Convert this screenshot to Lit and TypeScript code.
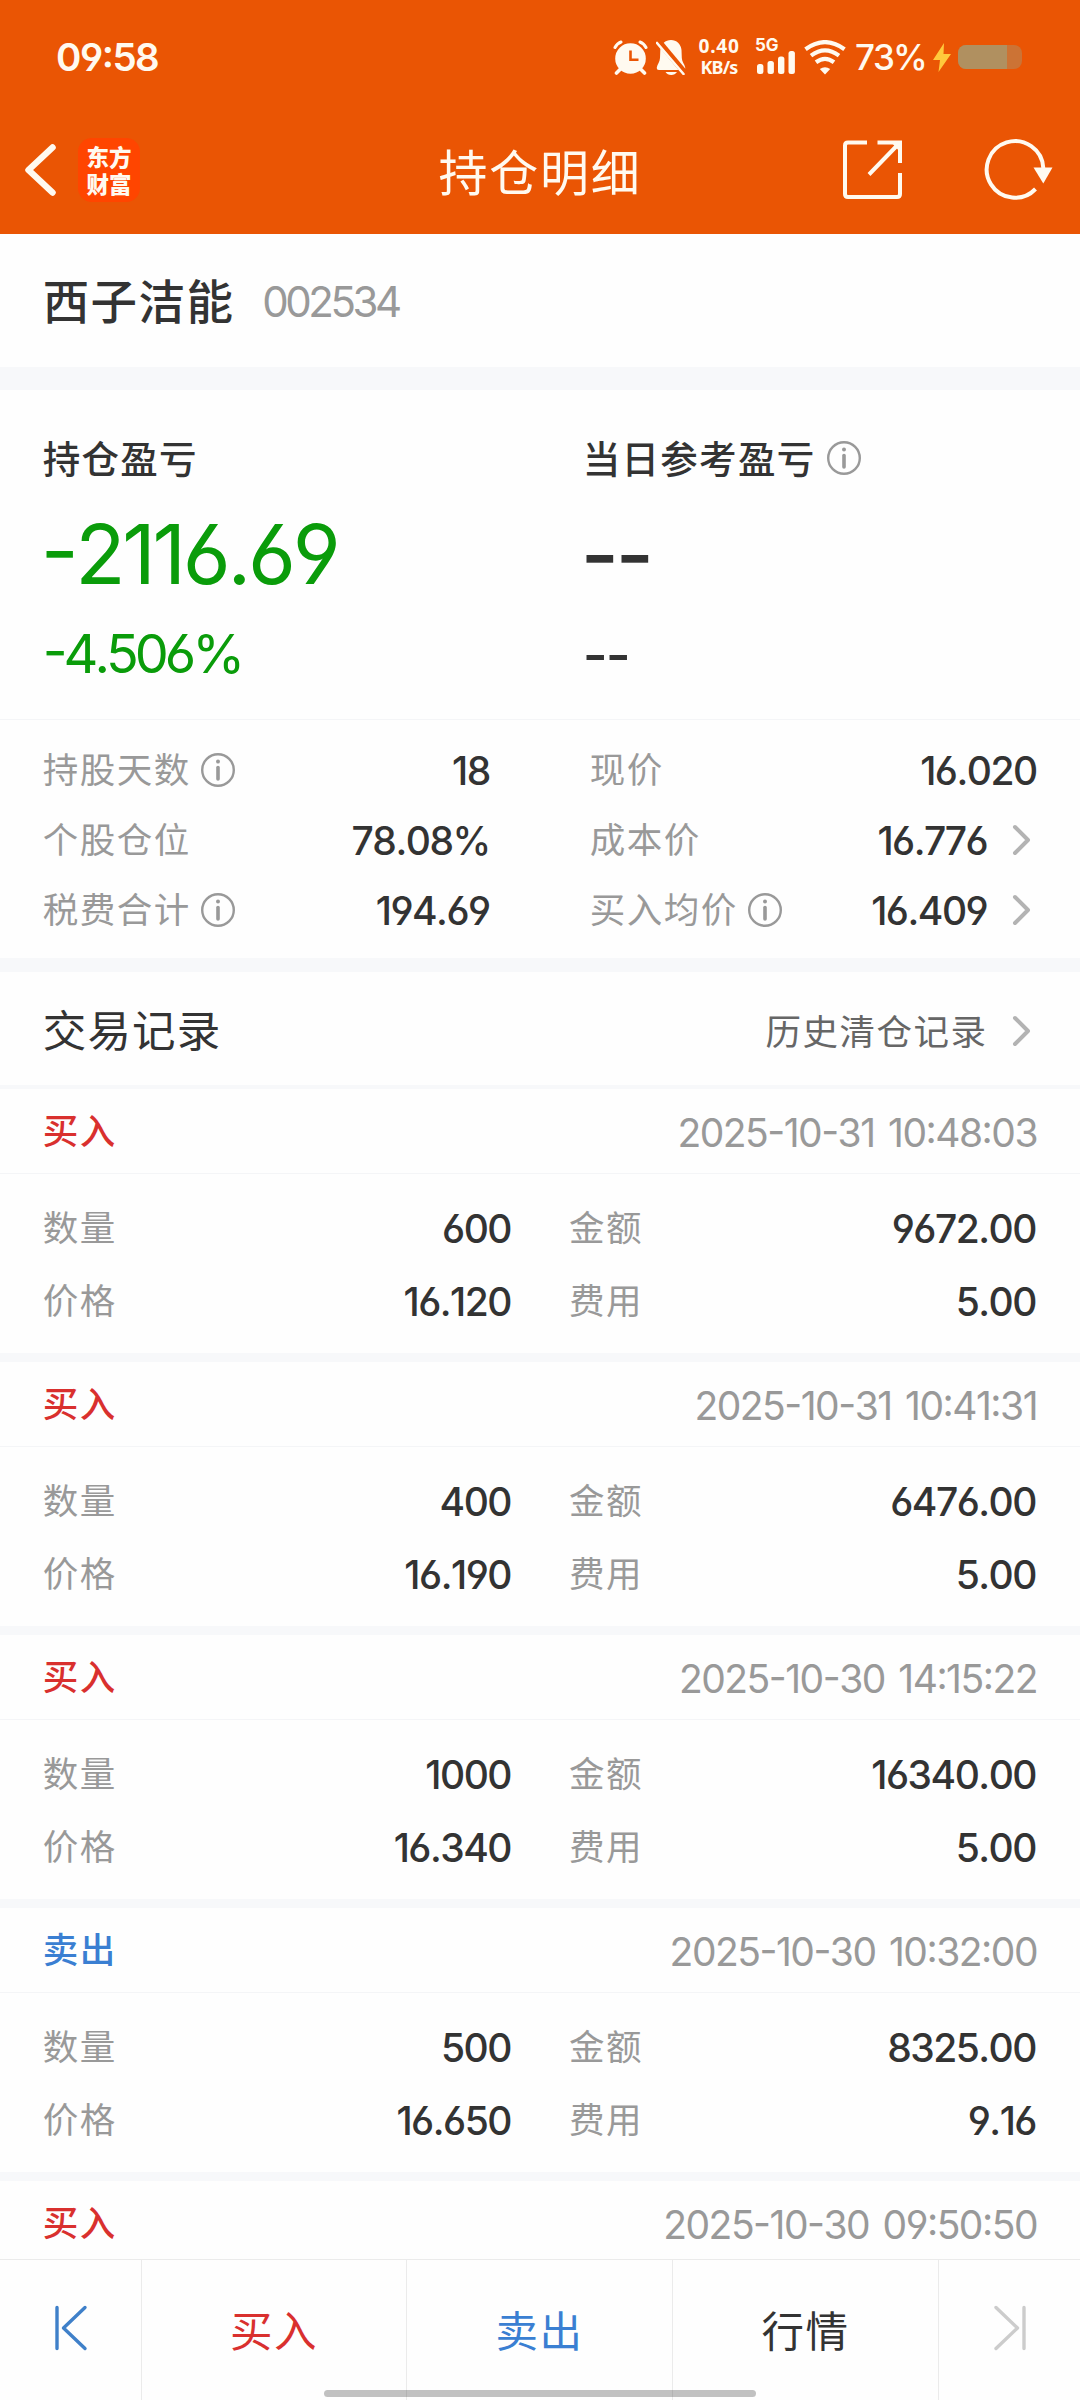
import { LitElement, html, css } from "lit";
import { customElement, property } from "lit/decorators.js";

interface Trade {
  side: "buy" | "sell";
  time: string;
  qty: string;
  amount: string;
  price: string;
  fee: string;
}

const TRADES: Trade[] = [
  { side: "buy", time: "2025-10-31 10:48:03", qty: "600", amount: "9672.00", price: "16.120", fee: "5.00" },
  { side: "buy", time: "2025-10-31 10:41:31", qty: "400", amount: "6476.00", price: "16.190", fee: "5.00" },
  { side: "buy", time: "2025-10-30 14:15:22", qty: "1000", amount: "16340.00", price: "16.340", fee: "5.00" },
  { side: "sell", time: "2025-10-30 10:32:00", qty: "500", amount: "8325.00", price: "16.650", fee: "9.16" },
  { side: "buy", time: "2025-10-30 09:50:50", qty: "", amount: "", price: "", fee: "" },
];

const infoIcon = html`<svg class="info" width="34" height="34" viewBox="0 0 34 34" fill="none">
  <circle cx="17" cy="17" r="15.8" stroke="#999" stroke-width="2.4" />
  <circle cx="17" cy="8.6" r="2" fill="#999" />
  <path d="M17 14.5v11.5" stroke="#999" stroke-width="3.6" stroke-linecap="round" />
</svg>`;

const chevron = html`<svg class="chevron" width="20" height="32" viewBox="0 0 20 32" fill="none">
  <path d="M3 3l13 13L3 29" stroke="#b3b3b3" stroke-width="4" stroke-linecap="round" stroke-linejoin="round" />
</svg>`;

@customElement("status-bar")
class StatusBar extends LitElement {
  static styles = css`
    :host { display: flex; height: 106px; padding: 8px 58px 0 56px; box-sizing: border-box; align-items: center;
      color: #fffaf0; font-family: Inter, "Noto Sans", sans-serif; }
    .time { flex: 1; font-size: 38.5px; font-weight: 600; letter-spacing: -1.5px; line-height: 44px; }
    .icons { display: flex; align-items: center; }
    .alarm { margin-right: 8px; }
    .bell { margin-right: 10px; }
    .net { width: 46px; text-align: center; font-weight: 700; margin-right: 13px; font-family: "Noto Sans", sans-serif; }
    .net span { display: block; line-height: 21px; }
    .rate { font-size: 19px; letter-spacing: 0.5px; }
    .unit { font-size: 18px; letter-spacing: -0.8px; }
    .cell { width: 42px; margin-right: 7px; }
    .gen { display: block; font-size: 17px; font-weight: 700; line-height: 11px; height: 10px; letter-spacing: -0.2px; }
    .cell svg, .icons svg { display: block; }
    .wifi { margin-right: 9px; }
    .pct { font-size: 35px; font-weight: 500; letter-spacing: -2px; line-height: 40px; width: 78px; }
    .bolt { margin-right: 7px; }
    .battery { width: 64px; height: 24px; border-radius: 8px; overflow: hidden; background: #cc7335; }
    .level { height: 100%; background: #b09060; }
  `;
  render() {
    return html`
      <div class="time">09:58</div>
      <div class="icons">
        <svg class="alarm" width="35" height="35" viewBox="0 0 35 35" fill="none">
          <path d="M2 7.5Q4 3.500 8 2M33 7.500Q31 3.500 27 2" stroke="#fffaf0" stroke-width="3" stroke-linecap="round" />
          <path d="M7.500 29l-4 4M27.500 29l4 4" stroke="#fffaf0" stroke-width="3.600" stroke-linecap="round" />
          <circle cx="17.500" cy="18.500" r="15.300" fill="#fffaf0" />
          <path d="M17.500 10.500v9.200h8" stroke="#ea5504" stroke-width="2.600" />
        </svg>
        <svg class="bell" width="30" height="36" viewBox="0 0 30 36">
          <path fill="#fffaf0" d="M15 1C9.500 1 4.800 5 4.300 11L4 19C3.800 23 1.500 25 .8 28.500Q.6 31 3 31H27Q29.600 31 29.200 28.500C28.500 25 26 23 25.800 19L25.500 11C25 5 20.500 1 15 1zM9.500 33h11.500q-2 3-5.800 3t-5.700-3z" />
          <path d="M1.500 1L29 34" stroke="#ea5504" stroke-width="6" />
          <path d="M1 4L27.500 35" stroke="#fffaf0" stroke-width="2.600" stroke-linecap="round" />
        </svg>
        <div class="net"><span class="rate">0.40</span><span class="unit">KB/s</span></div>
        <div class="cell">
          <span class="gen">5G</span>
          <svg width="42" height="24" viewBox="0 0 42 24" fill="#fffaf0">
            <rect x="2" y="14" width="6.400" height="10" rx="2.500" /><rect x="12.500" y="11" width="6.400" height="13" rx="2.500" />
            <rect x="23" y="6.500" width="6.400" height="17.500" rx="2.500" /><rect x="33.500" y="1" width="6.400" height="23" rx="2.500" />
          </svg>
        </div>
        <svg class="wifi" width="42" height="35" viewBox="0 0 42 35" fill="none" stroke="#fffaf0" stroke-width="4.200">
          <path d="M1.500 9.200Q21-5 40.500 9.200M7 15.600Q21 5.300 35 15.600M12 22.200Q21 15.500 30 22.200" />
          <path d="M15.800 29Q21 25.400 26.200 29L21 34.500z" fill="#fffaf0" stroke="none" />
        </svg>
        <div class="pct">73%</div>
        <svg class="bolt" width="18" height="29" viewBox="0 0 18 29"><path d="M11 0L0 17h7L5.500 29 18 11h-7.500z" fill="#ffc93c" /></svg>
        <div class="battery"><div class="level" style="width:76%"></div></div>
      </div>`;
  }
}

@customElement("nav-bar")
class NavBar extends LitElement {
  static styles = css`
    :host { display: grid; grid-template-columns: 400px 1fr 400px; height: 128px; align-items: start; color: #fffaf0;
      font-family: Inter, "Noto Sans CJK SC", sans-serif; }
    .left { display: flex; align-items: center; padding: 32px 0 0 23px; }
    .back { margin-right: 21px; }
    .logo { width: 62px; height: 64px; border-radius: 14px; background: #ff4500; display: flex; align-items: center; justify-content: center; }
    .mark { width: 46px; text-align: center; word-break: break-all; font-family: "Noto Sans CJK SC", sans-serif; font-weight: 900; font-size: 22.500px; line-height: 27px; padding-bottom: 1px; }
    .title { text-align: center; font-size: 49px; letter-spacing: 1.8px; line-height: 60px; padding-top: 34px;
      font-family: "Noto Sans CJK SC", sans-serif; }
    .right { display: flex; justify-content: flex-end; padding: 33px 26px 0 0; gap: 82px; }
    svg { display: block; }
  `;
  render() {
    return html`
      <div class="left">
        <svg class="back" width="34" height="54" viewBox="0 0 34 54" fill="none"><path d="M29.500 4.500L5.500 27l24 22.500" stroke="#fffaf0" stroke-width="6.500" stroke-linecap="round" stroke-linejoin="round" /></svg>
        <div class="logo"><span class="mark">东方财富</span></div>
      </div>
      <div class="title">持仓明细</div>
      <div class="right">
        <svg width="60" height="61" viewBox="0 0 60 61" fill="none" stroke="#fffaf0" stroke-width="4">
          <path d="M25 3.500H6Q3 3.500 3 6.500V55Q3 58 6 58H55Q58 58 58 55V34M35.500 3.500H58V24M57 4.500L27 35.500" />
          <path d="M49 3h9v10z" fill="#fffaf0" stroke="none" />
        </svg>
        <svg width="70" height="62" viewBox="0 0 70 62" fill="none">
          <path d="M51.500 50A28.300 28.300 0 1 1 59.300 29" stroke="#fffaf0" stroke-width="4" />
          <path d="M49.500 28.500H68.500L59.300 44.500z" fill="#fffaf0" />
        </svg>
      </div>`;
  }
}

@customElement("trade-record")
class TradeRecord extends LitElement {
  @property({ attribute: false }) trade!: Trade;
  static styles = css`
    :host { display: block; border-bottom: 9px solid #f7f8fa; height: 264px; }
    .head { display: flex; justify-content: space-between; height: 82px; padding: 2px 43px 0 42.700px; border-bottom: 1px solid #f4f5f7; align-items: center; }
    .side { font-size: 35.500px; letter-spacing: 1.500px; font-weight: 500; line-height: 50px; }
    .buy { color: #d9302e; }
    .sell { color: #3a7fd2; }
    .time { color: #999; font-size: 39px; letter-spacing: -1.500px; word-spacing: 4px; }
    .body { display: grid; grid-template-columns: 468.300px 467px; column-gap: 58px; grid-auto-rows: 73px; padding: 18px 0 0 42.700px; }
    .cell { display: flex; justify-content: space-between; align-items: center; }
    .label { color: #999; font-size: 35.500px; letter-spacing: 1.500px; line-height: 50px; }
    .value { color: #333; font-size: 39px; letter-spacing: -1.500px; font-weight: 500; }
  `;
  render() {
    const t = this.trade;
    const cells = [["数量", t.qty], ["金额", t.amount], ["价格", t.price], ["费用", t.fee]];
    return html`
      <div class="head">
        <span class="side ${t.side}">${t.side === "buy" ? "买入" : "卖出"}</span>
        <span class="time">${t.time}</span>
      </div>
      ${t.qty
        ? html`<div class="body">${cells.map(([k, v]) => html`<div class="cell"><span class="label">${k}</span><span class="value">${v}</span></div>`)}</div>`
        : null}`;
  }
}

@customElement("app-root")
class AppRoot extends LitElement {
  static styles = css`
    :host { display: flex; flex-direction: column; width: 1080px; height: 2400px; overflow: hidden; background: #fefefe; color: #333;
      font-family: Inter, "Noto Sans CJK SC", sans-serif; font-feature-settings: "cv03", "cv04", "case"; font-kerning: none; }
    .top { background: #ea5504; flex: none; }
    .stock { display: flex; align-items: center; height: 133px; padding: 2px 43px 0 42.700px; gap: 28px; box-sizing: border-box; flex: none; }
    .name { font-size: 46.500px; letter-spacing: 1.400px; font-weight: 500; line-height: 60px; }
    .code { color: #999; font-size: 42px; letter-spacing: -3.500px; }
    .band { height: 23px; background: #f7f8fa; flex: none; }
    .band.mid { height: 14px; }
    .band.thin { height: 4px; }
    .profit { display: grid; grid-template-columns: 540px 540px; height: 329px; border-bottom: 1px solid #f4f5f7; flex: none; }
    .col { padding: 41px 0 0 42.700px; }
    .cap { display: flex; align-items: center; height: 53px; gap: 11.500px; font-size: 37.500px; letter-spacing: 1.300px; font-weight: 500; }
    .cap svg { margin-bottom: 0; }
    .cap span { margin-bottom: 3px; }
    .big { font-size: 82.500px; letter-spacing: -3.300px; line-height: 100px; height: 100px; margin-top: 20px; margin-left: -2px; }
    .pct { font-size: 54px; letter-spacing: -4px; line-height: 70px; margin-top: 15px; }
    .green { color: #0a9c0a; }
    .dash { font-feature-settings: "case" 0, "calt" 0; }
    .big.dash { font-weight: 500; letter-spacing: -3px; }
    .pct.dash { font-weight: 500; letter-spacing: -2px; padding-top: 1px; }
    .stats { display: grid; grid-template-columns: 447px 447px; column-gap: 100px; grid-auto-rows: 70px; padding: 15px 0 13px 42.700px; flex: none; }
    .stat { display: flex; align-items: center; }
    .label { flex: 1; display: flex; align-items: center; gap: 10.500px; color: #999; font-size: 35.500px; letter-spacing: 1.500px; line-height: 50px; }
    .label span { margin-top: 1px; }
    .value { font-size: 39px; letter-spacing: -1.500px; font-weight: 500; }
    .chevron { margin-left: 24.500px; margin-right: 5px; display: block; }
    .info { display: block; margin-bottom: 1px; }
    .section { display: flex; align-items: center; height: 113px; padding: 5px 43px 0 42.700px; box-sizing: border-box; flex: none; }
    .heading { flex: 1; font-size: 43.500px; letter-spacing: 1.200px; line-height: 60px; padding-bottom: 1px; }
    .history { font-size: 35.500px; letter-spacing: 1.500px; color: #666; line-height: 50px; padding-top: 3px; }
    .records { flex: 1; min-height: 0; overflow: hidden; }
    .bottom { display: grid; grid-template-columns: 141px 264px 265px 265px 1fr; column-gap: 1px; height: 141px; border-top: 1px solid #ebebeb; box-sizing: border-box; background: #ebebeb; flex: none; position: relative; }
    .tab { background: #fefefe; display: flex; align-items: center; justify-content: center; font-size: 42.500px; letter-spacing: 1.500px; padding-bottom: 3px; }
    .icon { padding: 0 0 5px 0; }
    .buy { color: #d9302e; }
    .sell { color: #3a7fd2; }
    .home { position: absolute; left: 324px; bottom: 3px; width: 432px; height: 7px; border-radius: 4px; background: rgba(0, 0, 0, 0.24); }
  `;
  private stat(label: string, value: string, info = false, link = false) {
    return html`<div class="stat">
      <span class="label"><span>${label}</span>${info ? infoIcon : null}</span>
      <span class="value">${value}</span>${link ? chevron : null}
    </div>`;
  }
  render() {
    return html`
      <div class="top"><status-bar></status-bar><nav-bar></nav-bar></div>
      <div class="stock"><span class="name">西子洁能</span><span class="code">002534</span></div>
      <div class="band"></div>
      <div class="profit">
        <div class="col">
          <div class="cap"><span>持仓盈亏</span></div>
          <div class="big green">-2116.69</div>
          <div class="pct green">-4.506%</div>
        </div>
        <div class="col">
          <div class="cap"><span>当日参考盈亏</span>${infoIcon}</div>
          <div class="big dash">--</div>
          <div class="pct dash">--</div>
        </div>
      </div>
      <div class="stats">
        ${this.stat("持股天数", "18", true)} ${this.stat("现价", "16.020")}
        ${this.stat("个股仓位", "78.08%")} ${this.stat("成本价", "16.776", false, true)}
        ${this.stat("税费合计", "194.69", true)} ${this.stat("买入均价", "16.409", true, true)}
      </div>
      <div class="band mid"></div>
      <div class="section"><span class="heading">交易记录</span><span class="history">历史清仓记录</span>${chevron}</div>
      <div class="band thin"></div>
      <div class="records">${TRADES.map((t) => html`<trade-record .trade=${t}></trade-record>`)}</div>
      <div class="bottom">
        <div class="tab icon"><svg width="34" height="48" viewBox="0 0 34 48" fill="none" stroke="#3f80c9" stroke-width="3.400" stroke-linecap="round" stroke-linejoin="round"><path d="M3 3.500v41M31 3.500L9.500 24 31 44.500" /></svg></div>
        <div class="tab buy">买入</div>
        <div class="tab sell">卖出</div>
        <div class="tab">行情</div>
        <div class="tab icon"><svg width="34" height="48" viewBox="0 0 34 48" fill="none" stroke="#ccc" stroke-width="3.400" stroke-linecap="round" stroke-linejoin="round"><path d="M31 3.500v41M3 3.500L24.500 24 3 44.500" /></svg></div>
        <div class="home"></div>
      </div>`;
  }
}
